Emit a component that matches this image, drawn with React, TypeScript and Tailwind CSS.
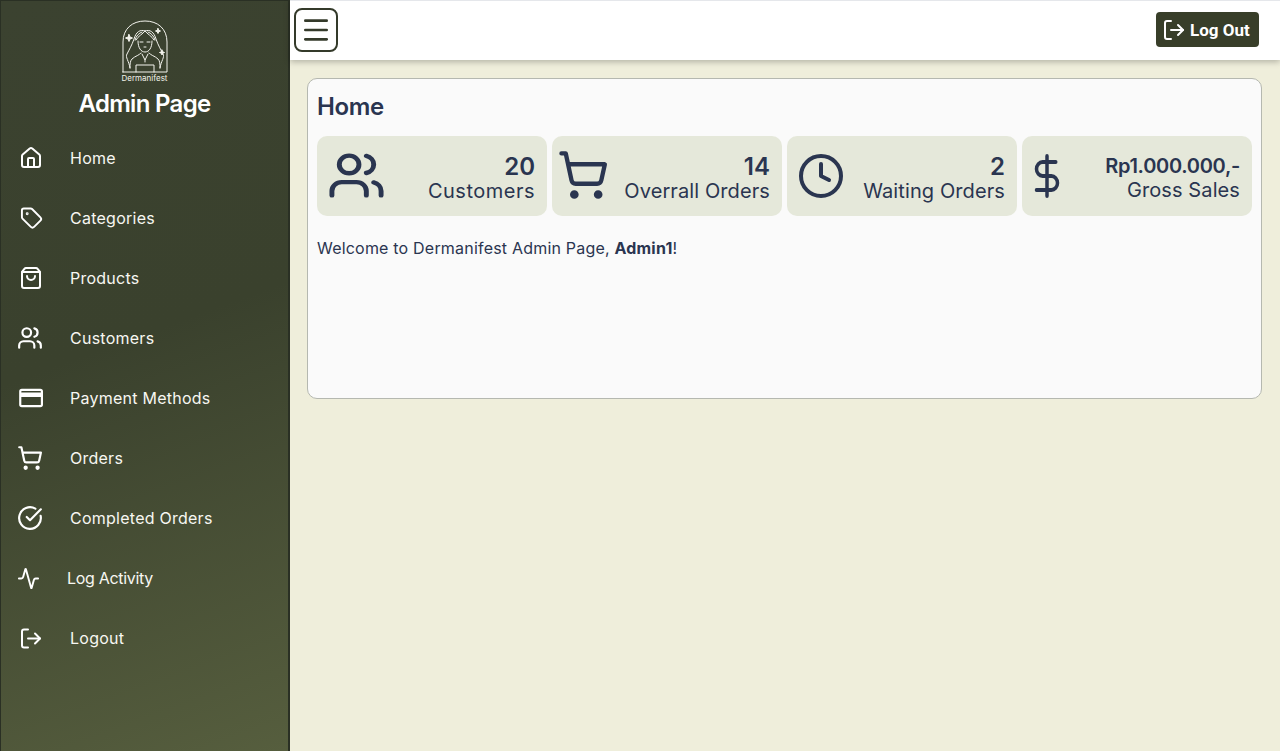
import React from "react";
import {
  Activity,
  CircleCheckBig,
  Clock,
  DollarSign,
  House,
  LogOut,
  Menu,
  ShoppingBag,
  ShoppingCart,
  Tag,
  Users,
} from "lucide-react";

const CardIcon = () => (
  <svg width="26" height="26" viewBox="0 0 24 24" fill="none" stroke="currentColor" strokeWidth="2" strokeLinejoin="round">
    <rect x="3" y="4.500" width="20" height="15" rx="1.500" />
    <path d="M3 8h20M3 10h20" />
  </svg>
);

const Logo = () => (
  <svg width="46" height="54" viewBox="0 0 46 54" fill="none" stroke="#f4f4ee" strokeWidth="1" strokeLinecap="round" strokeLinejoin="round">
    <path d="M1 52V22C1 9 10 1 23 1s22 8 22 21v30H1Z" />
    <path d="M23 11c-5-2-9 1-11 8-2 6-5 11-7 15-2 3 2 7 3 14" />
    <path d="M23 11c5-2 9 1 11 8 2 6 5 11 7 15 2 3-2 7-3 14" />
    <path d="M23 11c-2 3-7 5-9 9M23 11c2 3 7 5 9 9M20 12c-3 1-6 4-7 8M26 12c3 1 6 4 7 8" />
    <path d="M16 21c0 7 3 11 7 11s7-4 7-11" />
    <path d="M18 22h3M25 22h3M22 27h2" />
    <path d="M19 33c-1 2-6 3-9 6-2 2-2 5-2 9M27 33c1 2 6 3 9 6 2 2 2 5 2 9" />
    <path d="M20 34l3 6 3-6M14 52v-7h18v7" />
    <path d="M23 40v2" />
    <path d="M7 14.500l1 2.500 2.500 1-2.500 1-1 2.500-1-2.500-2.500-1 2.500-1Z" fill="#f4f4ee" />
    <path d="M36 8.500l.7 1.800 1.800.7-1.800.7-.7 1.800-.7-1.800-1.800-.7 1.800-.7Z" fill="#f4f4ee" />
    <path d="M40 30l.7 1.800 1.800.7-1.800.7-.7 1.800-.7-1.800-1.800-.7 1.800-.7Z" fill="#f4f4ee" />
  </svg>
);

const navItems = [
  { label: "Home", icon: <House size={26} className="ml-[2px]" /> },
  { label: "Categories", icon: <Tag size={26} className="ml-[3px]" /> },
  { label: "Products", icon: <ShoppingBag size={26} className="ml-[2px]" /> },
  { label: "Customers", icon: <Users size={26} /> },
  { label: "Payment Methods", icon: <CardIcon /> },
  { label: "Orders", icon: <ShoppingCart size={26} /> },
  { label: "Completed Orders", icon: <CircleCheckBig size={26} /> },
  { label: "Log Activity", icon: <Activity size={23} />, tight: true },
  { label: "Logout", icon: <LogOut size={25} className="ml-[2px]" /> },
];

const Stat = ({
  icon,
  value,
  label,
  small,
  wide,
}: {
  icon: React.ReactNode;
  value: string;
  label: string;
  small?: boolean;
  wide?: boolean;
}) => (
  <div className="flex h-20 w-[230px] items-center justify-between rounded-[10px] bg-[#e5e8da] pl-3 pr-3">
    {icon}
    <div className="pt-[4px] text-right text-[#2a3550]">
      <div className={small ? "text-[20px] leading-6 font-semibold tracking-[-0.3px]" : "text-[24px] leading-[25px] font-semibold"}>{value}</div>
      <div className={wide ? "text-[20px] leading-6 tracking-[0.5px]" : "text-[20px] leading-6 tracking-[0.1px]"}>{label}</div>
    </div>
  </div>
);

export default function App() {
  return (
    <div className="flex h-screen w-full overflow-hidden bg-[#efeedb] font-['Inter',sans-serif]">
      <aside className="flex w-[290px] shrink-0 flex-col border-r-2 border-l border-t border-[#2a3024] bg-[linear-gradient(160deg,#3b4230_0%,#3a412d_45%,#565e3e_100%)] text-white">
        <div className="flex flex-col items-center pt-[19px]">
          <Logo />
          <span className="-mt-px text-[8px] leading-[10px] text-[#f2f2ea]">Dermanifest</span>
          <h1 className="mt-[5px] text-[24px] leading-8 font-semibold tracking-[-0.7px]">Admin Page</h1>
        </div>
        <nav className="mt-[8px] flex flex-col">
          {navItems.map((item) => (
            <a key={item.label} className={item.tight ? "flex h-[60px] items-center gap-[24px] pl-[16px]" : "flex h-[60px] items-center gap-[27px] pl-[16px]"}>
              <span className={item.tight ? "flex w-[26px] justify-start" : "flex w-[26px] justify-center"}>{item.icon}</span>
              <span className={item.tight ? "text-[16px] tracking-[-0.3px] text-[#f7f7f2]" : "text-[16px] tracking-[0.25px] text-[#f7f7f2]"}>{item.label}</span>
            </a>
          ))}
        </nav>
      </aside>

      <div className="flex min-w-0 flex-1 flex-col">
        <header className="relative z-10 flex h-[60px] items-center justify-between border-t border-[#e5e7eb] bg-white pb-[2px] pl-1 pr-[21px] shadow-[0_2px_6px_rgba(0,0,0,0.25)]">
          <button className="flex h-11 w-11 items-center justify-center rounded-lg border-2 border-[#343a2a] text-[#343a2a]">
            <Menu size={32} strokeWidth={2} />
          </button>
          <button className="flex h-[35px] w-[103px] items-center gap-[4px] rounded bg-[#383e29] pl-[6px] font-['Roboto',sans-serif] text-[17px] font-bold text-white">
            <LogOut size={24} strokeWidth={2} />
            <span className="pt-[2px]">Log Out</span>
          </button>
        </header>

        <main className="pt-[18px] pr-[18px] pl-[17px]">
          <section className="h-[321px] rounded-[10px] border-[1.5px] border-[#b5b8b0] bg-[#fafafa] px-[9px] pt-[10px] text-[#2a3550]">
            <h2 className="text-[24px] leading-9 font-semibold tracking-[-0.4px]">Home</h2>
            <div className="mt-[11px] flex gap-[5px]">
              <Stat
                icon={<Users width={59} height={53} preserveAspectRatio="none" className="-ml-[2px] -mt-[2px]" />}
                value="20"
                label="Customers"
                wide
              />
              <Stat icon={<ShoppingCart size={52} className="-ml-[7px] -mt-[3px]" />} value="14" label="Overrall Orders" />
              <Stat icon={<Clock size={48} className="-ml-[2px] -mt-px" />} value="2" label="Waiting Orders" />
              <Stat
                icon={<DollarSign width={42} height={48} preserveAspectRatio="none" className="-ml-[8px] -mt-px" />}
                value="Rp1.000.000,-"
                label="Gross Sales"
                small
              />
            </div>
            <p className="mt-[20px] text-[16px] leading-6 tracking-[0.2px]">
              Welcome to Dermanifest Admin Page, <strong className="font-bold">Admin1</strong>!
            </p>
          </section>
        </main>
      </div>
    </div>
  );
}
